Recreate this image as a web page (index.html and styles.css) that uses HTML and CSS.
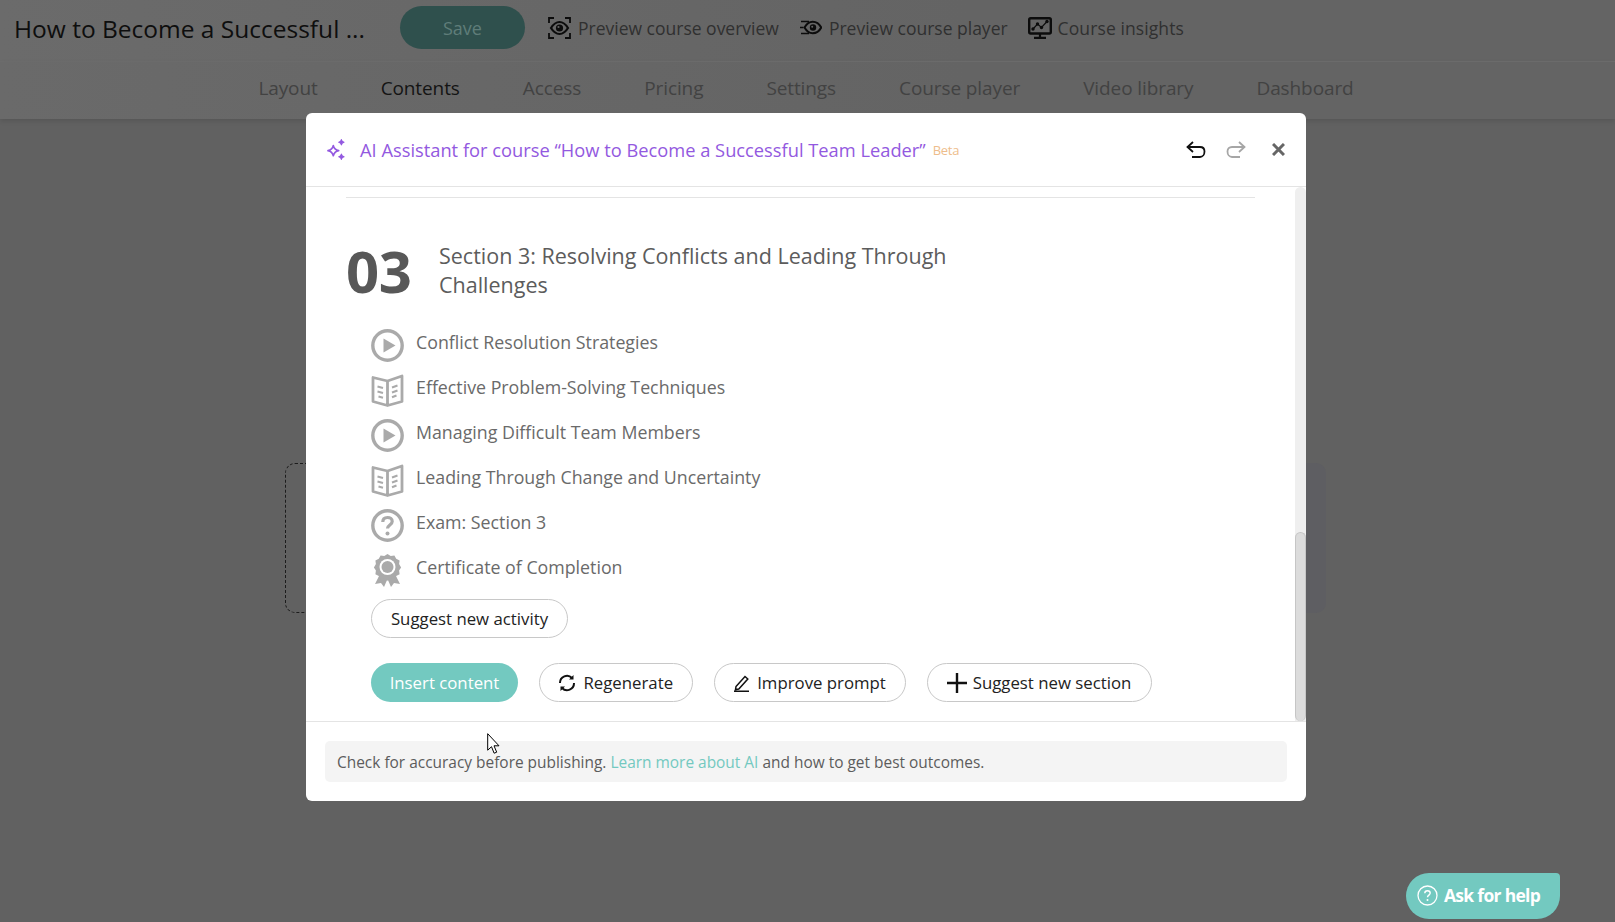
FILE: index.html
```html
<!DOCTYPE html>
<html lang="en">
<head>
  <meta charset="UTF-8">
  <title>How to Become a Successful Team Leader · Contents</title>
  <link rel="stylesheet" href="styles.css">
</head>
<body>
  <header class="topbar">
    <div class="course-name">How to Become a Successful ...</div>
    <button class="save-btn">Save</button>
    <a class="top-link link-overview">
      <svg width="23" height="22" viewBox="0 0 23 22" fill="none" stroke="#0c0c0c" stroke-width="1.800"><path d="M1 6V1h5M17 1h5v5M22 16v5h-5M6 21H1v-5"/><path d="M3 11c2.500-4 5.300-6 8.500-6s6 2 8.500 6c-2.500 4-5.300 6-8.500 6s-6-2-8.500-6z" stroke-width="2.200"/><circle cx="11.500" cy="11" r="3.600" fill="#0c0c0c" stroke="none"/><circle cx="10.500" cy="10" r="1.100" fill="#636363" stroke="none"/></svg>
      Preview course overview
    </a>
    <a class="top-link link-player">
      <svg width="22" height="15" viewBox="0 0 22 15" fill="none" stroke="#0c0c0c" stroke-width="1.600"><path d="M1 1.500h8M0 7.500h3.500M1 13.500h8"/><path d="M4.500 7.500c2.200-3.800 5-5.700 8.200-5.700s6.500 1.900 8.500 5.700c-2 3.800-5.300 5.700-8.500 5.700s-6-1.900-8.200-5.700z" stroke-width="2"/><circle cx="13" cy="7.500" r="3.200" fill="#0c0c0c" stroke="none"/><circle cx="12.200" cy="6.700" r="1" fill="#636363" stroke="none"/></svg>
      Preview course player
    </a>
    <a class="top-link link-insights">
      <svg width="24" height="22" viewBox="0 0 24 22" fill="none" stroke="#0c0c0c" stroke-width="2.400"><rect x="1.200" y="1.200" width="21.600" height="15.300" rx="1.500"/><path d="M5 12l4.500-5 4 3.500L19 4.500" stroke-width="1.200"/><g fill="#0c0c0c" stroke="none"><circle cx="5" cy="12" r="1.700"/><circle cx="9.500" cy="7" r="1.700"/><circle cx="13.500" cy="10.500" r="1.700"/><circle cx="19" cy="4.500" r="1.700"/></g><path d="M12 17v3M6 20.800h12" stroke-width="2.200"/></svg>
      Course insights
    </a>
  </header>

  <nav class="tabs">
    <a class="tab">Layout</a>
    <a class="tab tab-active">Contents</a>
    <a class="tab">Access</a>
    <a class="tab">Pricing</a>
    <a class="tab">Settings</a>
    <a class="tab">Course player</a>
    <a class="tab">Video library</a>
    <a class="tab">Dashboard</a>
  </nav>

  <main class="canvas">
    <div class="drop-card"></div>
    <div class="filled-card"></div>
  </main>

  <div class="modal">
    <div class="modal-head">
      <svg class="spark" width="20" height="21" viewBox="1.500 0.500 17 19.500" fill="none" stroke="#9359e0" stroke-width="1.500" stroke-linejoin="round"><path d="M7.500 6.500c.6 2.800 1.900 4.100 5 4.800-3.100.7-4.400 2-5 4.800-.6-2.800-1.900-4.100-5-4.800 3.100-.7 4.400-2 5-4.800z"/><path d="M15 1c.3 1.500.9 2.100 2.500 2.500-1.600.4-2.200 1-2.500 2.500-.3-1.500-.9-2.100-2.500-2.500C14.100 3.100 14.700 2.500 15 1zM15 14.500c.3 1.500.9 2.100 2.500 2.500-1.600.4-2.200 1-2.500 2.500-.3-1.500-.9-2.100-2.500-2.500 1.600-.4 2.200-1 2.500-2.500z" fill="#9359e0" stroke-width="1"/></svg>
      <div class="modal-title">AI Assistant for course “How to Become a Successful Team Leader”</div>
      <span class="beta">Beta</span>
      <div class="head-tools">
        <svg width="20" height="18" viewBox="0 0 20 18" fill="none" stroke="#111" stroke-width="1.800"><path d="M7 1L1.500 6 7 11M2 6h12c2.800 0 4.500 1.800 4.500 4.500S16.800 16 14 16H6"/></svg>
        <svg width="20" height="18" viewBox="0 0 20 18" fill="none" stroke="#a6a6a6" stroke-width="1.800"><path d="M13 1l5.500 5L13 11M18 6H6C3.200 6 1.500 7.800 1.500 10.500S3.200 16 6 16h8"/></svg>
        <svg class="close-x" width="13" height="13" viewBox="0 0 13 13" fill="none" stroke="#666" stroke-width="3"><path d="M1 1l11 11M12 1L1 12"/></svg>
      </div>
    </div>

    <div class="modal-body">
      <div class="scroll-area">
        <hr class="divider">
        <div class="section-head">
          <div class="section-num">03</div>
          <h3 class="section-title">Section 3: Resolving Conflicts and Leading Through Challenges</h3>
        </div>
        <ul class="activities">
          <li class="activity">
            <svg width="33" height="33" viewBox="0 0 33 33"><circle cx="16.500" cy="16.500" r="14.700" fill="none" stroke="#aaa" stroke-width="3.400"/><path d="M12.500 9.500l12 7-12 7z" fill="#aaa"/></svg>
            <span>Conflict Resolution Strategies</span>
          </li>
          <li class="activity">
            <svg width="33" height="33" viewBox="0 0 33 33" fill="none" stroke="#aaa" stroke-width="2.800" stroke-linejoin="round"><path d="M2 6v21.500l14.500 4 14.500-4V2L16.500 7 2 3.500zM16.500 7v24"/><path d="M6.500 12.500l5.500 1.500M6.500 17.500l5.500 1.500M7.500 22.500l4.500 1.300M26.500 11.500l-5.500 2M26.500 16.500l-5.500 2M25.500 21.500l-4.500 1.800" stroke-width="2"/></svg>
            <span>Effective Problem-Solving Techniques</span>
          </li>
          <li class="activity">
            <svg width="33" height="33" viewBox="0 0 33 33"><circle cx="16.500" cy="16.500" r="14.700" fill="none" stroke="#aaa" stroke-width="3.400"/><path d="M12.500 9.500l12 7-12 7z" fill="#aaa"/></svg>
            <span>Managing Difficult Team Members</span>
          </li>
          <li class="activity">
            <svg width="33" height="33" viewBox="0 0 33 33" fill="none" stroke="#aaa" stroke-width="2.800" stroke-linejoin="round"><path d="M2 6v21.500l14.500 4 14.500-4V2L16.500 7 2 3.500zM16.500 7v24"/><path d="M6.500 12.500l5.500 1.500M6.500 17.500l5.500 1.500M7.500 22.500l4.500 1.300M26.500 11.500l-5.500 2M26.500 16.500l-5.500 2M25.500 21.500l-4.500 1.800" stroke-width="2"/></svg>
            <span>Leading Through Change and Uncertainty</span>
          </li>
          <li class="activity">
            <svg width="33" height="33" viewBox="0 0 33 33" fill="none" stroke="#aaa"><circle cx="16.500" cy="16.500" r="14.700" stroke-width="3.400"/><path d="M11.800 13c0-3 2-4.500 4.700-4.500s4.700 1.500 4.700 4c0 3.500-4.700 3.500-4.700 7" stroke-width="3.200"/><circle cx="16.500" cy="24.500" r="2" fill="#aaa" stroke="none"/></svg>
            <span>Exam: Section 3</span>
          </li>
          <li class="activity">
            <svg width="33" height="33" viewBox="0 0 33 33"><path d="M9 20L4 30l6-1 3 4 3.500-8 3.500 8 3-4 6 1-5-10z" fill="#aaa"/><path d="M16.500 0l3.200 2 3.700-.6 1.800 3.300 3.400 1.700-.5 3.700 2 3.300-2 3.200.5 3.700-3.400 1.700-1.800 3.300-3.700-.6-3.200 2-3.200-2-3.700.6-1.800-3.300-3.400-1.700.5-3.700-2-3.200 2-3.300-.5-3.700 3.400-1.700 1.800-3.300 3.700.6z" fill="#aaa"/><circle cx="16.500" cy="13" r="8" fill="#fff"/><circle cx="16.500" cy="13" r="6" fill="#aaa"/></svg>
            <span>Certificate of Completion</span>
          </li>
        </ul>
        <button class="pill">Suggest new activity</button>
        <div class="actions">
          <button class="pill pill-primary">Insert content</button>
          <button class="pill pill-regen">
            <svg width="18" height="18" viewBox="0 0 18 18" fill="none" stroke="#111" stroke-width="2"><path d="M2 9a7 7 0 0 1 12-5M16 9a7 7 0 0 1-12 5"/><path d="M15.500 1v4.500H11zM2.500 17v-4.500H7z" fill="#111" stroke="none"/></svg>
            Regenerate
          </button>
          <button class="pill pill-improve">
            <svg width="17" height="18" viewBox="0 0 17 18" fill="none" stroke="#111" stroke-width="1.500"><path d="M3 12.500L12 2.500l2.800 2.500-9 10-3.300.5zM1 17.200h15"/></svg>
            Improve prompt
          </button>
          <button class="pill pill-section">
            <svg width="20" height="20" viewBox="0 0 20 20" stroke="#111" stroke-width="2.400"><path d="M0 10h20M10 0v20"/></svg>
            Suggest new section
          </button>
        </div>
      </div>
      <div class="scroll-track"><div class="scroll-thumb"></div></div>
    </div>

    <div class="modal-foot">
      <div class="notice">Check for accuracy before publishing. <a class="notice-link">Learn more about AI</a> and how to get best outcomes.</div>
    </div>
  </div>

  <svg class="cursor" width="13" height="22" viewBox="0 0 13 22"><path d="M.7.700v16.500l3.800-3.500 2.600 6.500 2.600-1-2.700-6.400H12z" fill="#fff" stroke="#000" stroke-width="1"/></svg>

  <button class="help-btn">
    <svg width="21" height="21" viewBox="0 0 21 21" fill="none" stroke="#fff"><circle cx="10.500" cy="10.500" r="9.500" stroke-width="1.300"/><path d="M7.800 8.300c0-1.700 1.200-2.600 2.700-2.600s2.700.9 2.700 2.400c0 2-2.700 2-2.700 4.200" stroke-width="1.400"/><circle cx="10.500" cy="15" r="1" fill="#fff" stroke="none"/></svg>
    Ask for help
  </button>
</body>
</html>
```

FILE: styles.css
```css
* {
  box-sizing: border-box;
}

html,
body {
  height: 100%;
}

body {
  margin: 0;
  font-family: "Open Sans", "Noto Sans", sans-serif;
  background-color: #616161;
  overflow: hidden;
}

button {
  font-family: inherit;
}

.topbar {
  display: flex;
  align-items: center;
  height: 62px;
  padding: 0 14px 6px;
  background: linear-gradient(90deg, #6b6b6b, #646464 60%);
  border-bottom: 1px solid #6e6e6e;
}

.course-name {
  width: 386px;
  padding-top: 2px;
  font-size: 24.500px;
  color: #0e0e0e;
  white-space: nowrap;
}

.save-btn {
  width: 125px;
  height: 43px;
  border: none;
  border-radius: 22px;
  background-color: #2f504d;
  color: #5f7d79;
  font-size: 18px;
}

.top-link {
  display: flex;
  align-items: center;
  gap: 7px;
  font-size: 17.500px;
  color: #303030;
  white-space: nowrap;
}

.link-overview {
  margin-left: 23px;
}

.link-player {
  margin-left: 21px;
}

.link-insights {
  margin-left: 20px;
  gap: 6px;
  letter-spacing: 0.1px;
}

.tabs {
  display: flex;
  justify-content: center;
  gap: 63px;
  height: 57px;
  padding: 12px 3px 0 0;
  background: linear-gradient(90deg, #6a6a6a, #646464 60%);
  box-shadow: 0 2px 5px rgba(0, 0, 0, 0.12);
}

.tab {
  font-size: 19px;
  letter-spacing: -0.1px;
  line-height: 28px;
  color: #424242;
}

.tab-active {
  color: #141414;
}

.canvas {
  display: flex;
  gap: 40px;
  padding: 344px 289px 0 285px;
}

.drop-card,
.filled-card {
  flex: 1;
  height: 150px;
  border-radius: 10px;
}

.drop-card {
  border: 1px dashed #1c1c1c;
}

.filled-card {
  background-color: #5e5e62;
}

.modal {
  position: absolute;
  top: 113px;
  left: 306px;
  display: flex;
  flex-direction: column;
  width: 1000px;
  height: 688px;
  background-color: #fff;
  border-radius: 6px;
  overflow: hidden;
}

.modal-head {
  display: flex;
  align-items: center;
  flex: none;
  height: 74px;
  padding: 0 21px 0 20px;
  border-bottom: 1px solid #e4e4e4;
}

.spark {
  margin-right: 14px;
}

.modal-title {
  font-size: 18.300px;
  font-weight: 500;
  color: #9359e0;
  white-space: nowrap;
}

.beta {
  margin: 0 0 0 7px;
  font-size: 13px;
  letter-spacing: -0.3px;
  color: #eebd8b;
}

.head-tools {
  display: flex;
  align-items: center;
  gap: 20px;
  margin-left: auto;
}

.close-x {
  margin-left: 6px;
}

.modal-body {
  display: flex;
  flex: none;
  height: 535px;
  border-bottom: 1px solid #e4e4e4;
}

.scroll-area {
  flex: 1;
  padding: 10px 40px 0;
}

.divider {
  margin: 0 0 43px;
  border: none;
  border-top: 1px solid #e4e4e4;
}

.section-head {
  display: flex;
  align-items: flex-start;
  height: 88px;
}

.section-num {
  width: 93px;
  margin-top: -10px;
  font-size: 58px;
  font-weight: 700;
  line-height: 80px;
  letter-spacing: -0.5px;
  color: #585858;
}

.section-title {
  width: 540px;
  margin: 0;
  font-size: 21.500px;
  font-weight: 400;
  line-height: 29px;
  color: #5c5c5c;
}

.activities {
  margin: 0;
  padding: 0 0 0 25px;
  list-style: none;
}

.activity {
  display: flex;
  gap: 12px;
  height: 45px;
  font-size: 17.800px;
  line-height: 26px;
  color: #6a6a6a;
}

.activity svg {
  flex: none;
}

.pill {
  display: flex;
  align-items: center;
  justify-content: center;
  gap: 7px;
  height: 39px;
  padding: 0;
  border: 1px solid #c8c8c8;
  border-radius: 20px;
  background-color: #fff;
  font-size: 16.800px;
  color: #222;
  white-space: nowrap;
}

.scroll-area > .pill {
  width: 197px;
  margin: 0 0 25px 25px;
}

.actions {
  display: flex;
  gap: 21px;
  margin-left: 25px;
}

.pill-primary {
  width: 147px;
  border: none;
  background-color: #73c9c0;
  color: #fff;
}

.pill-regen {
  width: 153.500px;
}

.pill-improve {
  width: 192px;
}

.pill-section {
  width: 225px;
  gap: 6px;
}

.scroll-track {
  display: flex;
  flex: none;
  width: 11px;
  padding-top: 345px;
  background-color: #efefef;
  border-radius: 6px 6px 0 0;
}

.scroll-thumb {
  width: 100%;
  background-color: #dcdcdc;
  border: 1px solid #c6c6c6;
  border-bottom: none;
  border-radius: 6px;
}

.modal-foot {
  padding: 19px 19px;
}

.notice {
  height: 41px;
  padding: 0 12px;
  border-radius: 5px;
  background-color: #f4f4f4;
  font-size: 15.450px;
  line-height: 43px;
  color: #5c5c5c;
}

.notice-link {
  color: #73c9c0;
}

.cursor {
  position: absolute;
  top: 733px;
  left: 487px;
}

.help-btn {
  position: absolute;
  top: 873px;
  left: 1406px;
  display: flex;
  align-items: center;
  gap: 6px;
  width: 154px;
  height: 46px;
  padding: 0 0 2px 11px;
  border: none;
  border-radius: 23px 4px 23px 23px;
  background-color: #73c9c0;
  font-size: 17.500px;
  font-weight: 700;
  letter-spacing: -0.7px;
  color: #fff;
}
```
